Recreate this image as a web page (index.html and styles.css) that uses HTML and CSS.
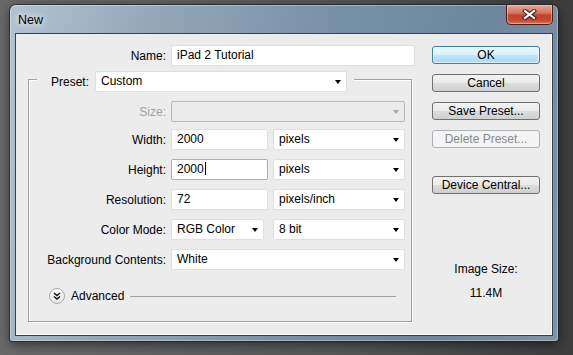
FILE: index.html
```html
<!DOCTYPE html>
<html lang="en">
    <head>
        <title>New</title>
        <link rel="stylesheet" href="styles.css">
    </head>
    <body>
        <div class="window">
            <div class="titlebar">
                <span class="title">New</span>
                <button class="close" aria-label="Close">
                    <svg width="15" height="11" viewBox="0 0 15 11">
                        <path d="M3 2 L12 9 M12 2 L3 9" stroke="#3b2622" stroke-width="4.2" stroke-linecap="square"/>
                        <path d="M3 2 L12 9 M12 2 L3 9" stroke="#fff" stroke-width="2.2" stroke-linecap="square"/>
                    </svg>
                </button>
            </div>

            <div class="client">
                <div class="form">
                    <div class="row row-name">
                        <span class="label">Name:</span>
                        <div class="field field-name">iPad 2 Tutorial</div>
                    </div>

                    <div class="group">
                        <div class="group-head">
                            <span>Preset:</span>
                            <div class="select select-preset">Custom</div>
                        </div>

                        <div class="rows">
                            <div class="row row-size">
                                <span class="label is-disabled">Size:</span>
                                <div class="select select-wide is-disabled"></div>
                            </div>
                            <div class="row">
                                <span class="label">Width:</span>
                                <div class="field field-num">2000</div>
                                <div class="select select-unit">pixels</div>
                            </div>
                            <div class="row">
                                <span class="label">Height:</span>
                                <div class="field field-num is-focused">2000<span class="caret"></span></div>
                                <div class="select select-unit">pixels</div>
                            </div>
                            <div class="row">
                                <span class="label">Resolution:</span>
                                <div class="field field-num">72</div>
                                <div class="select select-unit">pixels/inch</div>
                            </div>
                            <div class="row">
                                <span class="label">Color Mode:</span>
                                <div class="select select-mode">RGB Color</div>
                                <div class="select select-unit">8 bit</div>
                            </div>
                            <div class="row">
                                <span class="label">Background Contents:</span>
                                <div class="select select-wide">White</div>
                            </div>
                        </div>

                        <div class="advanced">
                            <span class="expander">
                                <svg width="8" height="8" viewBox="0 0 8 8">
                                    <path d="M1 1 L4 3.5 L7 1 M1 4.5 L4 7 L7 4.5" fill="none" stroke="#111" stroke-width="1.4"/>
                                </svg>
                            </span>
                            <span>Advanced</span>
                            <span class="rule"></span>
                        </div>
                    </div>
                </div>

                <div class="side">
                    <button class="btn btn-default">OK</button>
                    <button class="btn">Cancel</button>
                    <button class="btn">Save Preset...</button>
                    <button class="btn" disabled>Delete Preset...</button>
                    <button class="btn btn-device">Device Central...</button>

                    <div class="image-size">
                        <div>Image Size:</div>
                        <div class="image-size-value">11.4M</div>
                    </div>
                </div>
            </div>
        </div>
    </body>
</html>
```

FILE: styles.css
```css
html, body {
    height: 355px;
    overflow: hidden;
}
body {
    margin: 0;
    background: linear-gradient(to right, #696969 0%, #565656 60%, #3c3c3c 100%);
    font-family: "Liberation Sans", Arial, sans-serif;
    font-size: 12px;
    color: #000;
}
.window {
    box-sizing: border-box;
    width: 548px;
    height: 336px;
    margin: 5px 0 0 10px;
    padding: 0 5px 5px 5px;
    border-radius: 6px 6px 3px 3px;
    background: linear-gradient(100deg, #b3c2cf 0%, #93a6b8 25%, #7890a6 55%, #6e869c 80%, #8193a6 100%);
    box-shadow: 0 0 0 1px rgba(28, 36, 46, 0.7), inset 0 0 0 1px rgba(255, 255, 255, 0.3), 0 3px 12px rgba(0, 0, 0, 0.55);
    display: flex;
    flex-direction: column;
}
.titlebar {
    height: 28px;
    display: flex;
    align-items: flex-start;
}
.title {
    margin: 8px 0 0 3px;
    line-height: 14px;
    font-size: 12.5px;
    text-shadow: 0 0 6px rgba(255, 255, 255, 0.9), 0 0 10px rgba(255, 255, 255, 0.6);
}
.close {
    margin-left: auto;
    width: 47px;
    height: 20px;
    padding: 0;
    border: 1px solid #4e2019;
    border-top: none;
    border-radius: 0 0 5px 5px;
    background: linear-gradient(#e3a897 0%, #d47a62 40%, #c1432b 55%, #c44a30 80%, #d8785c 100%);
    box-shadow: inset 0 0 0 1px rgba(255, 220, 200, 0.45);
    display: flex;
    align-items: center;
    justify-content: center;
}
.client {
    flex: 1;
    display: flex;
    gap: 17px;
    padding: 11px 0 0 12px;
    background: #ececec;
    border: 1px solid #34414f;
    box-shadow: inset -1px -1px 0 #fff;
}

/* form column */
.form {
    width: 387px;
}
.row {
    display: flex;
    align-items: center;
    gap: 5px;
    height: 21px;
}
.row-name {
    padding-left: 1px;
}
.label {
    width: 137px;
    text-align: right;
    white-space: nowrap;
}
.is-disabled {
    color: #a3a3a3;
}
.field, .select {
    box-sizing: border-box;
    height: 21px;
    padding: 0 5px;
    background: #fff;
    border: 1px solid #dcdfe3;
    border-radius: 2px;
    line-height: 19px;
    white-space: nowrap;
}
.field-name {
    width: 244px;
}
.field-num {
    width: 97px;
}
.field.is-focused {
    border-color: #8db5de;
}
.caret {
    display: inline-block;
    width: 1px;
    height: 13px;
    margin-left: 1px;
    background: #000;
    vertical-align: -2px;
}
.select {
    display: flex;
    align-items: center;
    justify-content: space-between;
}
.select::after {
    content: "";
    margin-left: auto;
    border-top: 4px solid #000;
    border-left: 3.5px solid transparent;
    border-right: 3.5px solid transparent;
}
.select.is-disabled {
    background: #ebebeb;
    border-color: #b9b9b9;
}
.select.is-disabled::after {
    border-top-color: #a8a8a8;
}
.select-preset {
    width: 252px;
}
.select-unit {
    width: 132px;
}
.select-mode {
    width: 93px;
    margin-right: 4px;
}
.select-wide {
    width: 234px;
}

/* preset group box */
.group {
    box-sizing: border-box;
    width: 384px;
    margin-top: 13px;
    padding-bottom: 17px;
    border: 1px solid #a0a0a0;
    box-shadow: 1px 1px 0 #fff, inset 1px 1px 0 #fff;
}
.group-head {
    display: flex;
    align-items: center;
    gap: 6px;
    width: fit-content;
    margin: -9px 0 0 8px;
    padding: 0 7px 0 14px;
    background: #ececec;
}
.rows {
    display: flex;
    flex-direction: column;
    gap: 9px;
    padding-top: 9px;
}
.row-size {
    margin-bottom: -2px;
}
.advanced {
    display: flex;
    align-items: center;
    gap: 6px;
    height: 16px;
    margin-top: 18px;
    padding: 0 15px 0 20px;
}
.expander {
    box-sizing: border-box;
    width: 16px;
    height: 16px;
    border: 1px solid #a9a9a9;
    border-radius: 50%;
    background: linear-gradient(#ffffff, #e4e4e4);
    display: flex;
    align-items: center;
    justify-content: center;
}
.rule {
    flex: 1;
    height: 1px;
    margin-top: 1px;
    background: #a0a0a0;
}

/* button column */
.side {
    width: 108px;
    padding-top: 1px;
    display: flex;
    flex-direction: column;
    gap: 10px;
}
.btn {
    box-sizing: border-box;
    width: 108px;
    height: 18px;
    padding: 0;
    border: 1px solid #707070;
    border-radius: 3px;
    background: linear-gradient(#f2f2f2 0%, #ebebeb 50%, #dddddd 50%, #cfcfcf 100%);
    font-family: inherit;
    font-size: 12px;
    line-height: 16px;
    color: #000;
}
.btn-default {
    border-color: #3c7fb1;
    background: linear-gradient(#eaf6fd 0%, #d9f0fc 50%, #bee6fd 50%, #a7d9f5 100%);
    box-shadow: inset 0 0 0 1px rgba(255, 255, 255, 0.6);
}
.btn:disabled {
    border-color: #adb2b5;
    background: #f4f4f4;
    color: #8a8a8a;
}
.btn-device {
    margin-top: 18px;
}
.image-size {
    margin-top: 58px;
    text-align: center;
    line-height: 14px;
}
.image-size-value {
    margin-top: 10px;
}
```
